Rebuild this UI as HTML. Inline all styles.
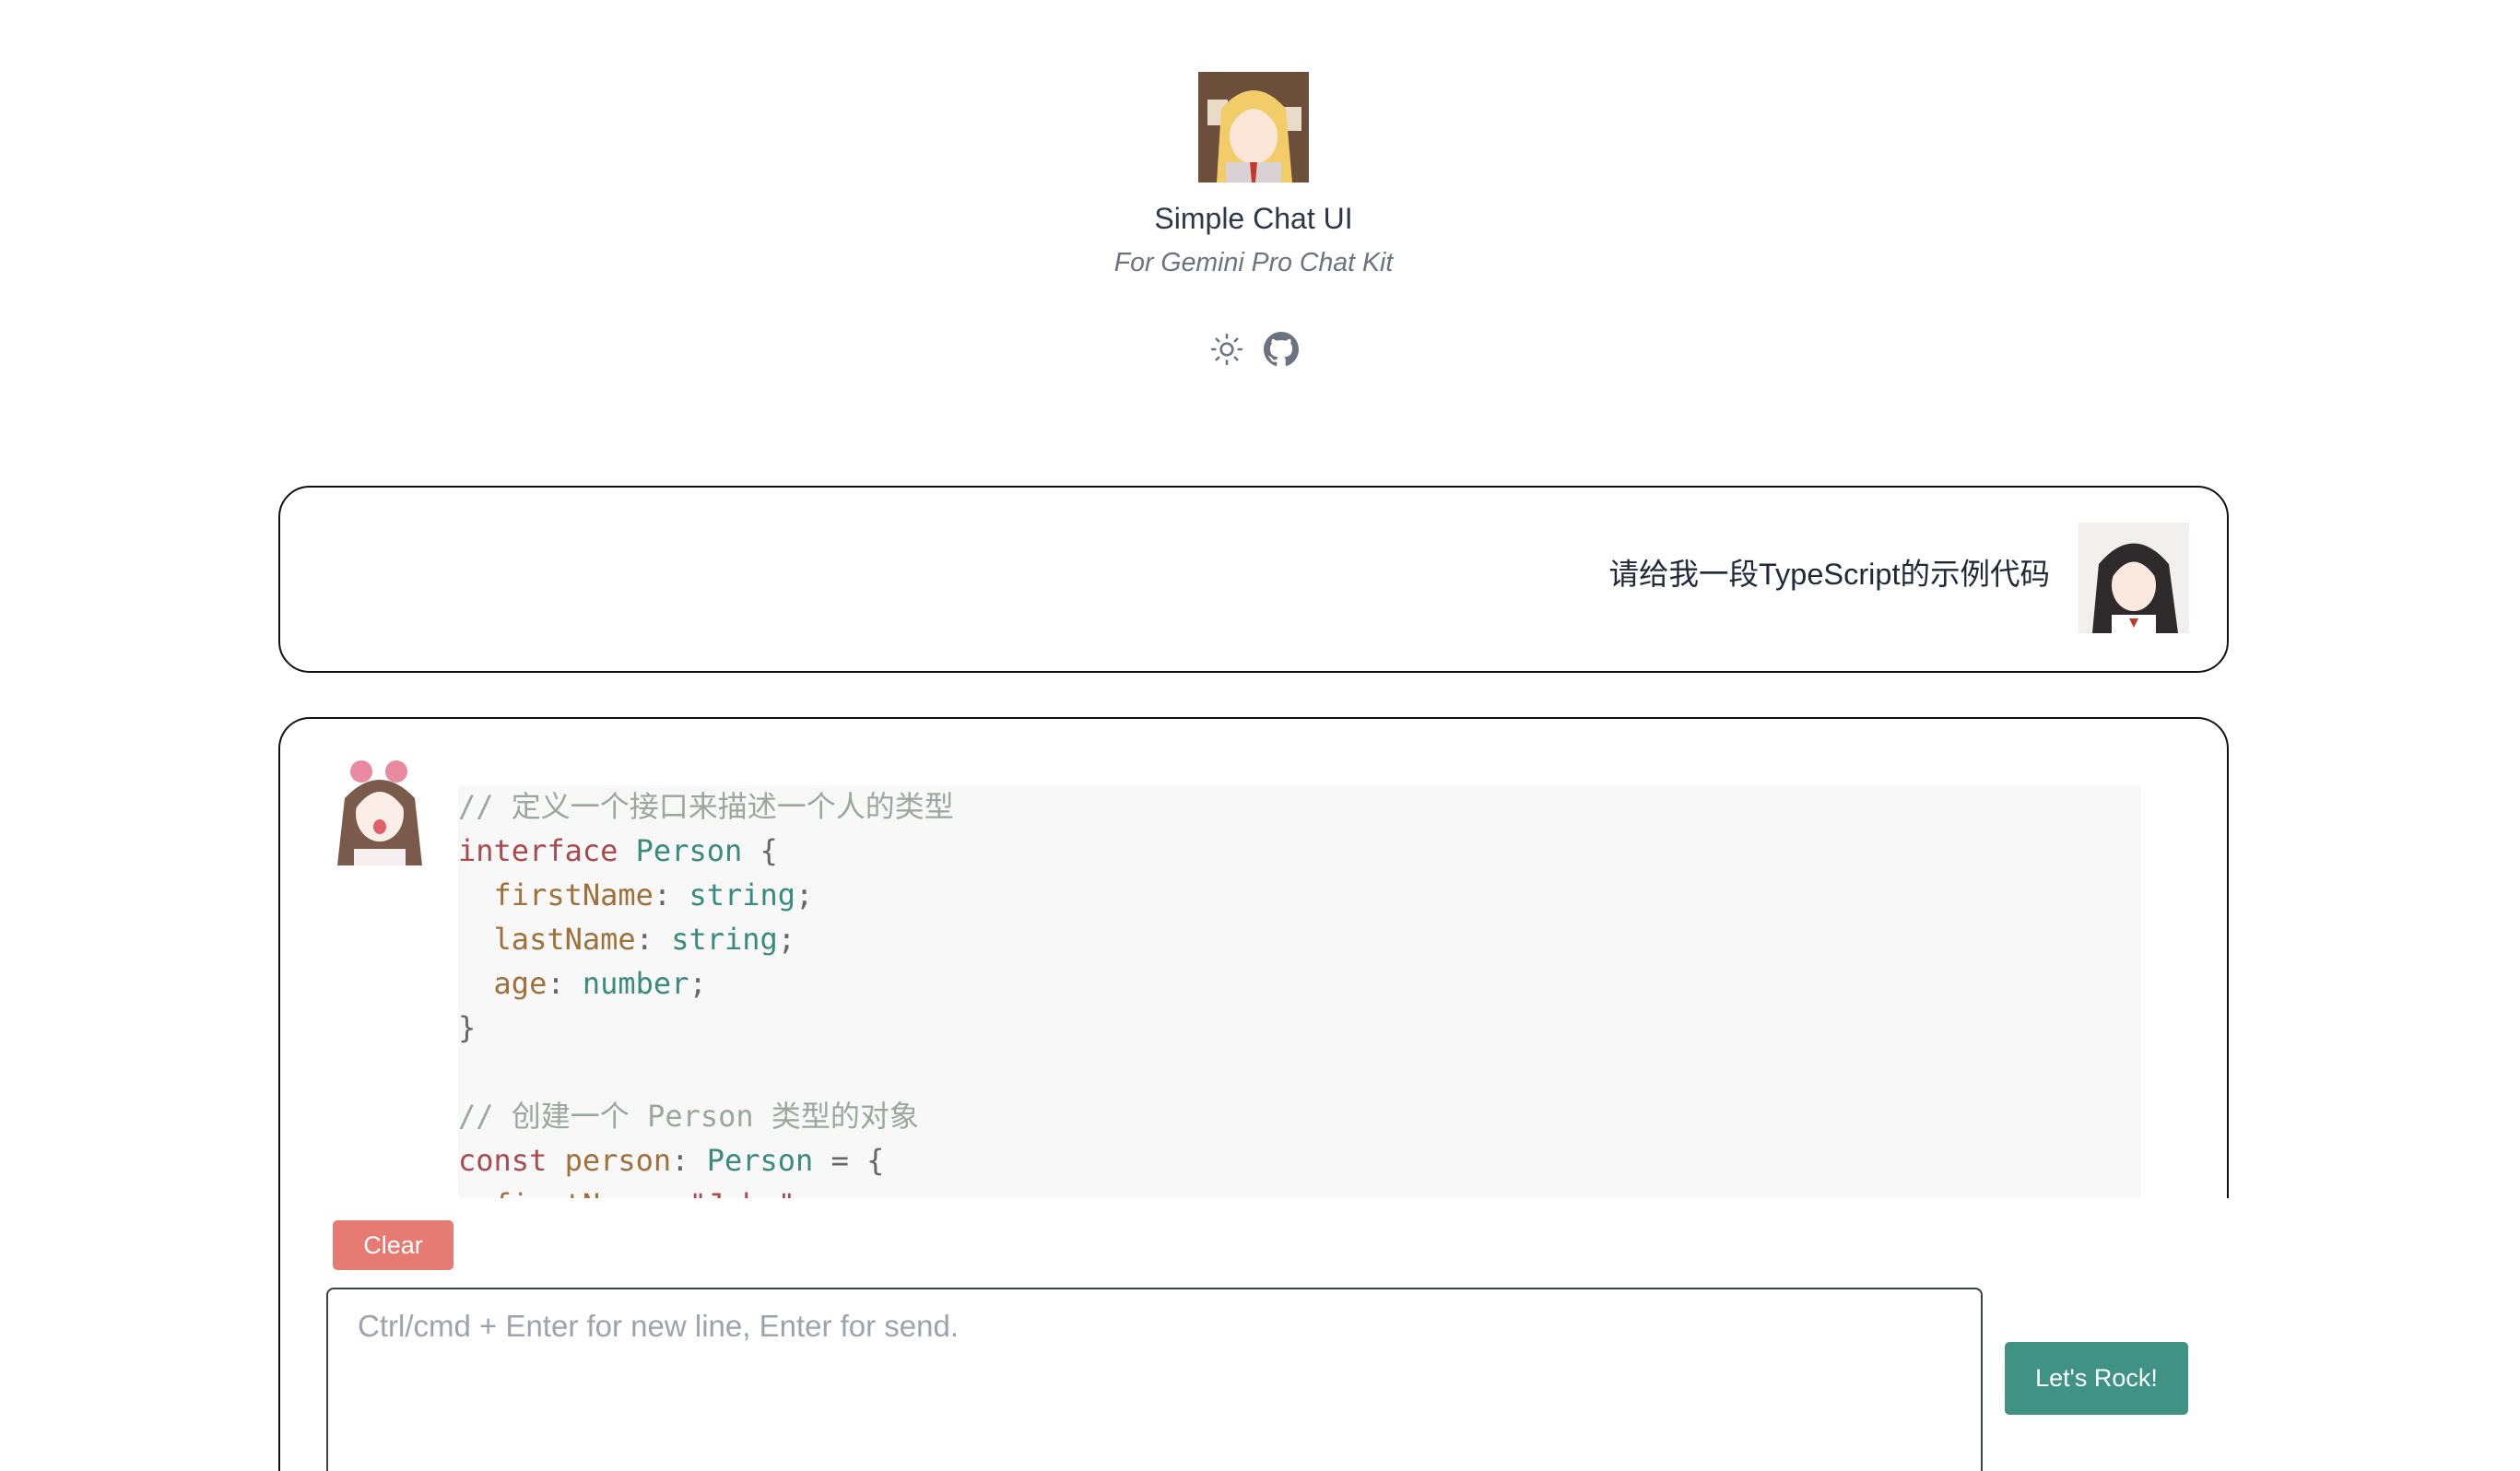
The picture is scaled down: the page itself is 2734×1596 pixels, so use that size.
<!DOCTYPE html>
<html><head><meta charset="utf-8"><style>
*{margin:0;padding:0;box-sizing:border-box}
html,body{width:2734px;height:1596px;overflow:hidden}
body{background:#fff;position:relative;font-family:"Liberation Sans","Noto Sans CJK SC",sans-serif}
.abs{position:absolute}
.title{left:0;width:2720px;text-align:center;top:217px;font-size:32px;color:#2d3748;line-height:40px}
.sub{left:0;width:2720px;text-align:center;top:267px;font-size:28.5px;font-style:italic;color:#6b7280;line-height:36px}
.card{border:2px solid #111;border-radius:34px;background:#fff}
.code{left:497px;top:852px;width:1826px;height:448px;background:#f8f8f8;overflow:hidden}
.code pre{font-family:"DejaVu Sans Mono","Liberation Mono","Noto Sans CJK SC",monospace;font-size:32px;line-height:48px;color:#666;margin-top:-1px}
.cm{color:#9aa89c}.kw{color:#a94a4f}.ty{color:#3a8a7e}.pr{color:#a0703a}.st{color:#a94a4f}
</style></head><body>
<svg class="abs" style="left:1300px;top:78px" width="120" height="120" viewBox="0 0 120 120">
<rect width="120" height="120" fill="#6b4f3a"/>
<rect x="10" y="30" width="22" height="28" fill="#e8dcc8"/><rect x="92" y="38" width="20" height="26" fill="#e8dcc8"/>
<path d="M20 120 L25 40 Q60 0 95 40 L102 120 Z" fill="#f3cc6a"/>
<ellipse cx="60" cy="70" rx="26" ry="30" fill="#fbe6d8"/>
<path d="M34 60 Q60 20 86 60 L86 45 Q60 10 34 45Z" fill="#f3cc6a"/>
<rect x="30" y="98" width="60" height="22" fill="#d8d2d4"/><path d="M56 98 L64 98 L62 120 L58 120Z" fill="#c0392b"/>
</svg>
<div class="abs title">Simple Chat UI</div>
<div class="abs sub">For Gemini Pro Chat Kit</div>
<svg class="abs" style="left:1312px;top:360px" width="38" height="38" viewBox="0 0 24 24" fill="none" stroke="#6b7280" stroke-width="1.6" stroke-linecap="round"><circle cx="12" cy="12" r="4"/><path d="M12 2v2M12 20v2M2 12h2M20 12h2M4.9 4.9l1.5 1.5M17.6 17.6l1.5 1.5M4.9 19.1l1.5-1.5M17.6 6.4l1.5-1.5"/></svg>
<svg class="abs" style="left:1371px;top:360px" width="38" height="38" viewBox="0 0 16 16"><path fill="#6b7280" d="M8 0C3.58 0 0 3.58 0 8c0 3.54 2.29 6.53 5.47 7.59.4.07.55-.17.55-.38 0-.19-.01-.82-.01-1.49-2.01.37-2.53-.49-2.69-.94-.09-.23-.48-.94-.82-1.13-.28-.15-.68-.52-.01-.53.63-.01 1.08.58 1.23.82.72 1.21 1.87.87 2.33.66.07-.52.28-.87.51-1.07-1.78-.2-3.64-.89-3.64-3.95 0-.87.31-1.59.82-2.15-.08-.2-.36-1.02.08-2.12 0 0 .67-.21 2.2.82.64-.18 1.320-.27 2-.27.68 0 1.36.09 2 .27 1.53-1.04 2.2-.82 2.2-.82.44 1.1.16 1.92.08 2.12.51.56.82 1.27.82 2.15 0 3.07-1.87 3.75-3.65 3.95.29.25.54.73.54 1.48 0 1.07-.01 1.93-.01 2.2 0 .21.15.46.55.38A8.013 8.013 0 0016 8c0-4.42-3.58-8-8-8z"/></svg>

<div class="abs card" style="left:302px;top:527px;width:2116px;height:203px"></div>
<div class="abs" style="left:1490px;width:734px;text-align:right;top:603px;font-size:32.5px;line-height:40px;color:#1f2937">请给我一段TypeScript的示例代码</div>
<svg class="abs" style="left:2255px;top:567px" width="120" height="120" viewBox="0 0 120 120">
<rect width="120" height="120" fill="#f2f0ee"/>
<path d="M15 120 L22 45 Q60 0 98 45 L108 120 Z" fill="#2e2a2c"/>
<ellipse cx="60" cy="68" rx="24" ry="28" fill="#fbe9e0"/>
<path d="M36 60 Q60 25 84 60 L84 42 Q60 18 36 42Z" fill="#2e2a2c"/>
<rect x="36" y="100" width="48" height="20" fill="#fff"/><path d="M55 104 L65 104 L60 114Z" fill="#c0392b"/>
</svg>

<div class="abs card" style="left:302px;top:778px;width:2116px;height:830px;border-bottom:none;border-radius:34px 34px 0 0"></div>
<svg class="abs" style="left:354px;top:821px" width="118" height="118" viewBox="0 0 118 118">
<rect width="118" height="118" fill="#fff"/>
<circle cx="38" cy="16" r="12" fill="#e98aa0"/><circle cx="76" cy="16" r="12" fill="#e98aa0"/>
<path d="M12 118 L20 45 Q58 5 96 45 L104 118 Z" fill="#7a5a4a"/>
<ellipse cx="58" cy="62" rx="26" ry="30" fill="#fbeee6"/>
<path d="M32 56 Q58 20 84 56 L84 40 Q58 16 32 40Z" fill="#7a5a4a"/>
<ellipse cx="58" cy="76" rx="7" ry="8" fill="#e0606a"/>
<rect x="30" y="100" width="56" height="18" fill="#f7eef0"/>
</svg>
<div class="abs code"><pre><span class="cm">// 定义一个接口来描述一个人的类型</span>
<span class="kw">interface</span> <span class="ty">Person</span> {
  <span class="pr">firstName</span>: <span class="ty">string</span>;
  <span class="pr">lastName</span>: <span class="ty">string</span>;
  <span class="pr">age</span>: <span class="ty">number</span>;
}

<span class="cm">// 创建一个 Person 类型的对象</span>
<span class="kw">const</span> <span class="pr">person</span>: <span class="ty">Person</span> = {
  <span class="pr">firstName</span>: <span class="st">"John"</span>,</pre></div>
<div class="abs" style="left:305px;top:1300px;width:2429px;height:296px;background:#fff"></div>
<div class="abs" style="left:361px;top:1324px;width:131px;height:54px;background:#e57b73;border-radius:5px;color:#fff;font-size:27px;line-height:54px;text-align:center">Clear</div>
<div class="abs" style="left:354px;top:1397px;width:1797px;height:215px;border:2px solid #374151;border-radius:8px;background:#fff"></div>
<div class="abs" style="left:388px;top:1418px;font-size:33px;line-height:42px;color:#9ca3af">Ctrl/cmd + Enter for new line, Enter for send.</div>
<div class="abs" style="left:2175px;top:1456px;width:199px;height:79px;background:#3f9284;border-radius:5px;color:#fff;font-size:27px;line-height:79px;text-align:center">Let's Rock!</div>
</body></html>
